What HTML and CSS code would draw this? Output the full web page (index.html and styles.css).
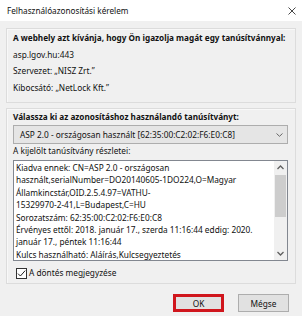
FILE: index.html
```html
<!DOCTYPE html>
<html lang="hu">
<head>
  <meta charset="UTF-8">
  <title>Felhasználóazonosítási kérelem</title>
  <link rel="stylesheet" href="styles.css">
</head>
<body>
  <div class="dialog">
    <div class="titlebar">
      <span class="title">Felhasználóazonosítási kérelem</span>
      <svg class="close" width="8" height="8" viewBox="0 0 8 8"><path d="M0.5 0.5L7.5 7.5M7.5 0.5L0.5 7.5" stroke="#333" stroke-width="0.9"/></svg>
    </div>
    <div class="content">
      <div class="panel info">
        <p class="lead">A webhely azt kívánja, hogy Ön igazolja magát egy tanúsítvánnyal:</p>
        <p>asp.lgov.hu:443</p>
        <p>Szervezet: „NISZ Zrt.”</p>
        <p>Kibocsátó: „NetLock Kft.”</p>
      </div>
      <div class="panel choose">
        <p class="lead">Válassza ki az azonosításhoz használandó tanúsítványt:</p>
        <div class="select">
          <span>ASP 2.0 - országosan használt [62:35:00:C2:02:F6:E0:C8]</span>
          <svg width="7" height="4" viewBox="0 0 7 4"><path d="M0.5 0.5L3.5 3.3L6.5 0.5" fill="none" stroke="#666" stroke-width="1"/></svg>
        </div>
        <p class="sub">A kijelölt tanúsítvány részletei:</p>
        <div class="details">
          <div class="details-text">
            Kiadva ennek: CN=ASP 2.0 - országosan<br>
            használt,serialNumber=DO20140605-1DO224,O=Magyar<br>
            Államkincstár,OID.2.5.4.97=VATHU-<br>
            15329970-2-41,L=Budapest,C=HU<br>
            Sorozatszám: 62:35:00:C2:02:F6:E0:C8<br>
            Érvényes ettől: 2018. január 17., szerda 11:16:44 eddig: 2020.<br>
            január 17., péntek 11:16:44<br>
            Kulcs használható: Aláírás,Kulcsegyeztetés
          </div>
          <div class="scrollbar">
            <svg class="arrow" width="13" height="13" viewBox="0 0 13 13"><path d="M3.5 8L6.5 5L9.5 8" fill="none" stroke="#606060" stroke-width="1.3"/></svg>
            <div class="track"><div class="thumb"></div></div>
            <svg class="arrow" width="13" height="13" viewBox="0 0 13 13"><path d="M3.5 5L6.5 8L9.5 5" fill="none" stroke="#606060" stroke-width="1.3"/></svg>
          </div>
        </div>
        <label class="remember">
          <span class="check"><svg width="9" height="9" viewBox="0 0 9 9"><path d="M1 4.6L3.4 7L8.2 1.6" fill="none" stroke="#222" stroke-width="1"/></svg></span>
          A döntés megjegyzése
        </label>
      </div>
      <div class="buttons">
        <button class="btn ok">OK</button>
        <button class="btn">Mégse</button>
      </div>
    </div>
  </div>
</body>
</html>
```

FILE: styles.css
```css
html, body {margin:0; padding:0;}
body {font-family:"Noto Sans", "Open Sans", sans-serif; font-size:8.3px; color:#111; background:#f0f0f0; width:302px; height:316px; overflow:hidden;}
p {margin:0;}
.dialog {width:302px; height:316px; display:flex; flex-direction:column;}
.titlebar {height:21px; background:#fff; display:flex; align-items:center; justify-content:space-between; padding:0 6px 0 7px;}
.title {font-size:8.2px; line-height:21px;}
.content {padding:7px 6px 0 6px; display:flex; flex-direction:column;}
/* raised group boxes */
.panel {border:1px solid #dcdcdc; box-shadow:inset 1px 1px 0 #f8f8f8; padding:0 7px 2px 6px;}
.info {height:70px; padding-top:1px;}
.info p {line-height:16.5px;}
.lead {font-weight:bold; font-size:8.2px; line-height:16px;}
.choose {margin-top:5px;}
.select {height:17px; border:1px solid #adadad; background:#e5e5e5; display:flex; align-items:center; justify-content:space-between; padding:0 4px 0 6px;}
.sub {line-height:14px;}
.details {margin-top:2px; height:99px; border:1px solid #828790; background:#fff; display:flex; overflow:hidden;}
.details-text {flex:1; padding:1px 0 0 2px; line-height:12.4px; white-space:nowrap; overflow:hidden;}
.scrollbar {width:13px; background:#f0f0f0; display:flex; flex-direction:column;}
.arrow {display:block;}
.track {flex:1; padding:1px 1px 0 1px;}
.thumb {height:42px; background:#cdcdcd;}
.remember {display:flex; align-items:center; gap:2px; margin-top:4px; line-height:16px; padding-left:3px;}
.check {width:9px; height:9px; border:1px solid #333; background:#fff; display:flex;}
.buttons {display:flex; justify-content:flex-end; gap:14px; padding:10px 7px 0 0;}
.btn {font-family:inherit; font-size:8.3px; width:51px; height:18px; border:1px solid #adadad; background:#e1e1e1; padding:0; color:#111;}
.ok {border:3px solid #d0161d;}
```
